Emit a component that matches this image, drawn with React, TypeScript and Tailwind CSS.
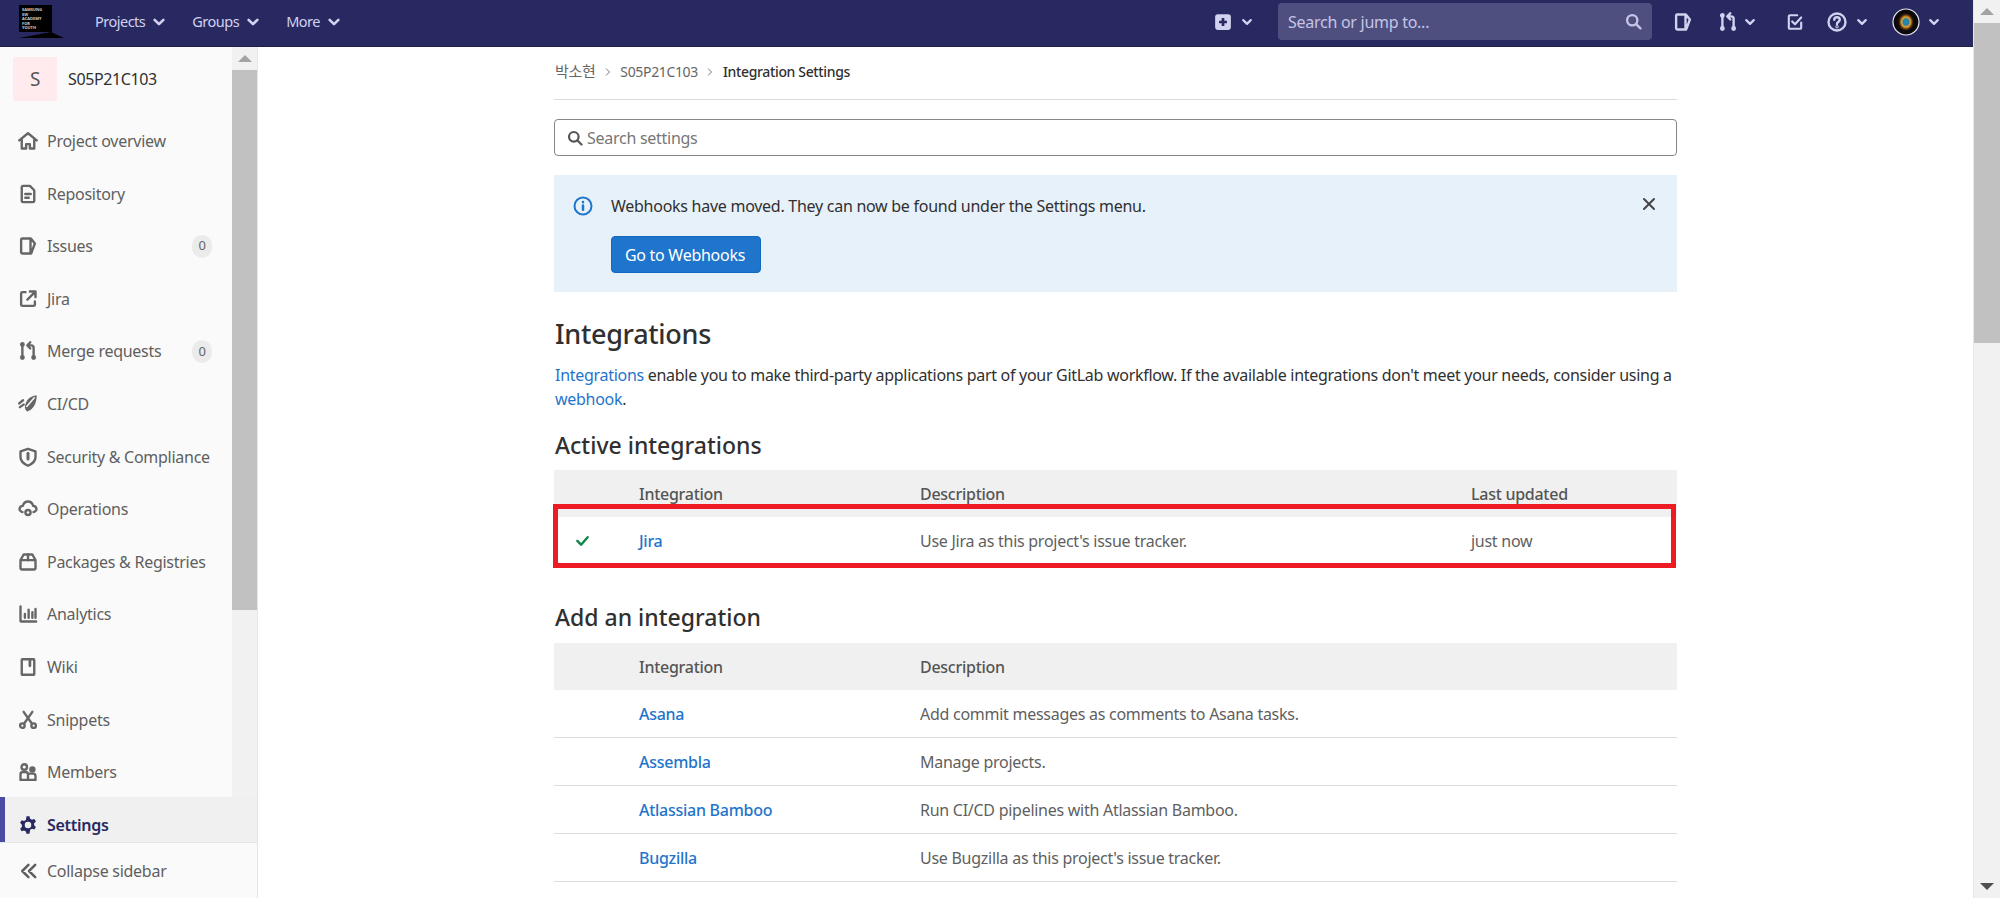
import React from "react";

const I = ({ children, size = 20, sw = 1.9, className = "" }: { children: React.ReactNode; size?: number; sw?: number; className?: string }) => (
  <svg width={size} height={size} viewBox="0 0 16 16" fill="none" stroke="currentColor" strokeWidth={sw} strokeLinecap="round" strokeLinejoin="round" className={"shrink-0 " + className}>
    {children}
  </svg>
);

const Chev = ({ size = 14, className = "" }: { size?: number; className?: string }) => (
  <svg width={size} height={size} viewBox="0 0 16 16" fill="none" stroke="currentColor" strokeWidth={3} strokeLinecap="round" strokeLinejoin="round" className={"shrink-0 " + className}>
    <path d="M3 5.5 8 10.5 13 5.5" />
  </svg>
);

const icons: Record<string, React.ReactNode> = {
  home: <path d="M1 7.5 8 1.8l7 5.7M3 6.2V14h3.5v-3.5h3V14H13V6.2" />,
  repo: <><path d="M3 2.5a1 1 0 0 1 1-1h5.5L13 5v8.5a1 1 0 0 1-1 1H4a1 1 0 0 1-1-1z" /><path d="M5.8 8h4.4M5.8 11h2.8" /></>,
  issues: <path d="M3.5 2h6.8l3.2 4-3 8H3.5a1 1 0 0 1-1-1V3a1 1 0 0 1 1-1zM10 2v12" />,
  jira: <><path d="M6 2.5H3.5a1 1 0 0 0-1 1v9a1 1 0 0 0 1 1h9a1 1 0 0 0 1-1V10" /><path d="M7.5 8.5 13.5 2.5M9.5 2h4.5v4.5" /></>,
  mr: <><circle cx="3.5" cy="2.8" r="1" /><circle cx="3.5" cy="13.2" r="1" /><circle cx="12.5" cy="13.2" r="1" /><path d="M3.5 4v8M12.5 12V5.5a2 2 0 0 0-2-2H8M9.8 1 7.5 3.5 9.8 6" /></>,
  ci: <><path d="M15 1C9.500 1.500 6 5 5.500 10.500 5.800 12 6.500 13.500 7.500 14 12 12.500 14.800 8 15 1z" fill="currentColor" stroke="none" /><path d="M13 3 7 10" stroke="#fafafa" strokeWidth={1.200} /><path d="M1 7.500 4 5M1.500 10.500 4.500 8.500" /></>,
  shield: <><path d="M8 1.5 14 3.5V8c0 3-2.5 5.5-6 7-3.500-1.500-6-4-6-7V3.500z" /><path d="M8 5v4.500" strokeWidth={2.400} /></>,
  ops: <><path d="M3.500 10.500C1.500 10 1 8.500 1.300 7.500c.3-1.200 1.400-2 2.500-2C4.500 3.200 6 2 8 2s3.500 1.200 4.200 3.500c1.100 0 2.200.8 2.500 2 .3 1-.2 2.500-2.200 3" /><circle cx="8" cy="10.700" r="3" fill="currentColor" stroke="none" /><circle cx="8" cy="10.700" r="1" fill="#fafafa" stroke="none" /></>,
  pkg: <><path d="M2 6.500h12V13a1 1 0 0 1-1 1H3a1 1 0 0 1-1-1zM2 6.500 4.500 2h7L14 6.500" /><path d="M8 2v4.500" /></>,
  chart: <path d="M2 2v11.500a.500.500 0 0 0 .500.500H14.500M5.500 8v3M8.500 4.500V11M11.500 6.500V11M14 4v7" />,
  wiki: <><path d="M3.500 1.800h9a.500.500 0 0 1 .500.500v11.400a.500.500 0 0 1-.500.500h-9a.500.500 0 0 1-.500-.500V2.300a.500.500 0 0 1 .500-.500z" /><path d="M9.500 2v5" strokeWidth={2.200} /></>,
  snip: <><circle cx="3.500" cy="12.500" r="1.800" /><circle cx="12.500" cy="12.500" r="1.800" /><path d="M4.500 1.500 11.200 11M11.500 1.500 4.800 11" /></>,
  users: <><circle cx="5" cy="4" r="2.200" /><circle cx="11.500" cy="6" r="1.600" fill="currentColor" /><path d="M2 14.300V10a2 2 0 0 1 2-2h2a2 2 0 0 1 2 2v4.300zM8 14.300h6v-3a2 2 0 0 0-2-2H9.500" /></>,
  gear: <><path d="M6.800 1h2.400l.5 1.900 1.500.8 1.900-.6 1.200 2-1.400 1.400v1.700l1.400 1.400-1.200 2-1.900-.6-1.500.8L9.200 15H6.800l-.5-1.900-1.500-.8-1.900.6-1.200-2 1.400-1.400V7.800L1.700 6.100l1.200-2 1.900.6 1.500-.8z" fill="currentColor" stroke="none" /><circle cx="8" cy="8" r="2.600" fill="#f0f0f0" stroke="none" /></>,
  collapse: <path d="M7.500 2.500 2 8l5.500 5.500M13.500 2.500 8 8l5.500 5.500" />,
};

const items: { name: string; icon: string; badge?: boolean }[] = [
  { name: "Project overview", icon: "home" },
  { name: "Repository", icon: "repo" },
  { name: "Issues", icon: "issues", badge: true },
  { name: "Jira", icon: "jira" },
  { name: "Merge requests", icon: "mr", badge: true },
  { name: "CI/CD", icon: "ci" },
  { name: "Security & Compliance", icon: "shield" },
  { name: "Operations", icon: "ops" },
  { name: "Packages & Registries", icon: "pkg" },
  { name: "Analytics", icon: "chart" },
  { name: "Wiki", icon: "wiki" },
  { name: "Snippets", icon: "snip" },
  { name: "Members", icon: "users" },
];

const Up = ({ className = "" }: { className?: string }) => (
  <div className={"h-0 w-0 border-x-[7px] border-b-[7px] border-x-transparent " + className} />
);

function TopBar() {
  return (
    <header className="flex h-[47px] shrink-0 items-center border-b border-[#1f1f4f] bg-[#292961] text-[#d1d1f0]">
      <div className="relative ml-[19px] mt-[5px] h-[33px] w-[45px] shrink-0 self-start">
        <div className="h-[27px] w-[33px] bg-black pl-[3px] pt-[3px] text-[4px] font-bold leading-[4.500px] tracking-normal text-[#cfcfcf]">
          <div>SAMSUNG</div><div>SW</div><div>ACADEMY</div><div>FOR</div><div>YOUTH</div>
        </div>
        <div className="absolute left-0 top-[27px] h-0 w-0 border-b-[6px] border-l-[32px] border-r-[13px] border-b-black border-l-transparent border-r-transparent" />
      </div>
      <nav className="mb-[2px] ml-[31px] flex items-center text-[14.500px] tracking-[-0.500px]">
        <span>Projects</span><Chev className="ml-[7px]" />
        <span className="ml-[26px]">Groups</span><Chev className="ml-[7px]" />
        <span className="ml-[26px]">More</span><Chev className="ml-[7px]" />
      </nav>
      <div className="flex-1" />
      <svg width="18" height="18" viewBox="0 0 16 16" className="mb-[3px] shrink-0 text-[#d1d1f0]">
        <rect x="1" y="1" width="14" height="14" rx="2.500" fill="currentColor" />
        <path d="M8 4.500v7M4.500 8h7" stroke="#292961" strokeWidth="2.400" />
      </svg>
      <Chev size={12} className="mb-[3px] ml-[9px]" />
      <div className="ml-[25px] mt-[3px] flex h-[37px] w-[374px] items-center justify-between self-start rounded-[4px] bg-[#4f4f7f] px-[10px] text-[16px] text-[#c5c5e8]">
        <span>Search or jump to...</span>
        <I size={17} sw={2.200}><circle cx="6.800" cy="6.800" r="4.800" /><path d="m10.500 10.500 4 4" /></I>
      </div>
      <I size={20} className="mb-[3px] ml-[21px]"><path d="M3.500 2h6.800l3.200 4-3 8H3.500a1 1 0 0 1-1-1V3a1 1 0 0 1 1-1zM10 2v12" /></I>
      <I size={20} className="mb-[3px] ml-[25px]">{icons.mr}</I>
      <Chev size={12} className="mb-[3px] ml-[6px]" />
      <I size={18} className="mb-[3px] ml-[30px]"><path d="M13.500 8.500V13a1 1 0 0 1-1 1h-9a1 1 0 0 1-1-1V3a1 1 0 0 1 1-1H10M5.500 7.500 8 10l5.500-6" /></I>
      <I size={20} className="mb-[3px] ml-[23px]"><circle cx="8" cy="8" r="6.800" /><path d="M5.800 6.200C5.800 5 6.800 4.200 8 4.200s2.200.8 2.200 2c0 1.800-2.200 1.800-2.200 3.300" /><circle cx="8" cy="11.800" r=".4" /></I>
      <Chev size={12} className="mb-[3px] ml-[9px]" />
      <svg width="28" height="28" viewBox="0 0 28 28" className="mb-[3px] ml-[24px] shrink-0">
        <defs>
          <radialGradient id="nebula">
            <stop offset="0" stopColor="#1f8fc4" />
            <stop offset="0.35" stopColor="#2d7f9c" />
            <stop offset="0.55" stopColor="#e6a92e" />
            <stop offset="0.8" stopColor="#5a2a10" />
            <stop offset="1" stopColor="#0a0a0a" />
          </radialGradient>
        </defs>
        <circle cx="14" cy="14" r="13" fill="#0a0a0a" stroke="#e8e8f5" strokeWidth="1.200" />
        <ellipse cx="14" cy="14" rx="8" ry="9" fill="url(#nebula)" />
      </svg>
      <Chev size={12} className="mb-[3px] ml-[8px] mr-[33px]" />
    </header>
  );
}

function Sidebar() {
  return (
    <aside className="flex h-full w-[258px] shrink-0 flex-col border-r border-[#e5e5e5] bg-[#fafafa]">
      <div className="flex min-h-0 flex-1">
        <div className="w-[232px] shrink-0">
          <div className="ml-[13px] mt-[10px] flex h-[44px] items-center">
            <div className="flex h-[44px] w-[44px] items-center justify-center rounded-[2px] bg-[#ffebee] text-[19px] text-[#555]">S</div>
            <span className="ml-[11px] text-[16px] tracking-[-0.400px] text-[#303030]">S05P21C103</span>
          </div>
          <div className="mt-[17.500px]">
            {items.map((it) => (
              <div key={it.name} className="mb-[7.600px] flex h-[45px] items-center whitespace-nowrap pl-[18px] pr-[20px] text-[#666]">
                <I size={20} className="text-[#666]">{icons[it.icon]}</I>
                <span className="ml-[9px] text-[16px] text-[#5f5f5f]">{it.name}</span>
                {it.badge && <span className="ml-auto flex h-[23px] w-[20px] items-center justify-center rounded-[10px] bg-[#ebebeb] text-[13px] text-[#666]">0</span>}
              </div>
            ))}
          </div>
        </div>
        <div className="flex w-[25px] shrink-0 flex-col bg-[#f1f1f1]">
          <div className="flex h-[23px] items-center justify-center"><Up className="border-b-[#a3a3a3]" /></div>
          <div className="h-[540px] bg-[#c1c1c1]" />
        </div>
      </div>
      <div className="flex h-[45px] shrink-0 border-l-[5px] border-[#4b4ba3] bg-[#f0f0f0]">
        <div className="flex h-full flex-1 items-center pl-[13px] pt-[10px] text-[#292961]">
          <I size={20}>{icons.gear}</I>
          <span className="ml-[9px] text-[16px] font-semibold">Settings</span>
        </div>
      </div>
      <div className="flex h-[56px] shrink-0 items-center border-t border-[#e5e5e5] pl-[20px] text-[#5f5f5f]">
        <I size={18} sw={2.200}>{icons.collapse}</I>
        <span className="ml-[9px] text-[16px]">Collapse sidebar</span>
      </div>
    </aside>
  );
}

const Head = ({ last }: { last?: boolean }) => (
  <div className="grid h-[47px] grid-cols-[85px_281px_551px_1fr] items-center bg-[#f0f0f0] pt-[1px] text-[16px] font-medium text-[#555]">
    <span />
    <span>Integration</span>
    <span>Description</span>
    <span>{last ? "Last updated" : ""}</span>
  </div>
);

const Row = ({ name, desc, check, when }: { name: string; desc: string; check?: boolean; when?: string }) => (
  <div className="grid h-[48px] grid-cols-[85px_281px_551px_1fr] items-center border-b border-[#dbdbdb] text-[16px] text-[#5f5f5f]">
    <span className="pl-[21px] text-[#108548]">
      {check && <I size={15} sw={2.600}><path d="M2.500 8.500 6.500 12.500 13.500 4.500" /></I>}
    </span>
    <span className="font-medium text-[#1f75cb]">{name}</span>
    <span>{desc}</span>
    <span>{when}</span>
  </div>
);

function Content() {
  return (
    <main className="min-w-0 flex-1 overflow-hidden bg-white pl-[296px] pr-[296px]">
      <div className="flex h-[53px] items-center border-b border-[#dbdbdb] pb-[3px] text-[14px] tracking-[-0.350px] text-[#666]">
        <span className="ml-[1px] text-[15px]">박소현</span>
        <svg width="10" height="10" viewBox="0 0 10 10" fill="none" stroke="#777" className="mx-[7.500px]"><path d="m3 1.500 3.500 3.500L3 8.500" /></svg>
        <span>S05P21C103</span>
        <svg width="10" height="10" viewBox="0 0 10 10" fill="none" stroke="#777" className="mx-[7.500px]"><path d="m3 1.500 3.500 3.500L3 8.500" /></svg>
        <span className="font-medium text-[#303030]">Integration Settings</span>
      </div>
      <div className="mt-[19px] flex h-[37px] items-center rounded-[4px] border border-[#868686] pl-[12px] text-[16px] text-[#777]">
        <I size={16} sw={2.200} className="text-[#555]"><circle cx="6.800" cy="6.800" r="4.800" /><path d="m10.500 10.500 4 4" /></I>
        <span className="ml-[4px]">Search settings</span>
      </div>
      <div className="relative mt-[19px] h-[117px] bg-[#e7f1fa] pl-[19px] pt-[19px]">
        <div className="flex h-[24px] items-center text-[16px] text-[#303030]">
          <I size={20} sw={1.600} className="text-[#1f75cb]"><circle cx="8" cy="8" r="6.800" /><path d="M8 7.500v3.500M8 4.800v.1" strokeWidth={2} /></I>
          <span className="ml-[18px]">Webhooks have moved. They can now be found under the Settings menu.</span>
        </div>
        <div className="ml-[38px] mt-[18px] flex h-[37px] w-[150px] items-center justify-center rounded-[4px] border border-[#1068bf] bg-[#1f75cb] pr-[2px] text-[16px] text-white">Go to Webhooks</div>
        <svg width="16" height="16" viewBox="0 0 16 16" fill="none" stroke="#444" strokeWidth="2" strokeLinecap="round" className="absolute right-[20px] top-[21px]"><path d="m3 3 10 10M13 3 3 13" /></svg>
      </div>
      <h1 className="ml-[1px] mt-[22px] flex h-[40px] items-center text-[27px] font-medium tracking-[-0.300px] text-[#303030]">Integrations</h1>
      <p className="ml-[1px] mt-[9px] text-[16px] leading-[24px] tracking-[-0.290px] text-[#303030]">
        <span className="text-[#1f75cb]">Integrations</span> enable you to make third-party applications part of your GitLab workflow. If the available integrations don't meet your needs, consider using a <span className="text-[#1f75cb]">webhook</span>.
      </p>
      <h2 className="ml-[1px] mt-[18px] flex h-[32px] items-center text-[23px] font-medium tracking-normal text-[#303030]">Active integrations</h2>
      <div className="relative mt-[9px]">
        <Head last />
        <Row name="Jira" desc="Use Jira as this project's issue tracker." check when="just now" />
        <div className="absolute left-[-1px] right-[1px] top-[34px] h-[64px] border-[5px] border-[#ed1c24]" />
      </div>
      <h2 className="ml-[1px] mt-[36px] flex h-[32px] items-center text-[23px] font-medium tracking-normal text-[#303030]">Add an integration</h2>
      <div className="mt-[10px]">
        <Head />
        <Row name="Asana" desc="Add commit messages as comments to Asana tasks." />
        <Row name="Assembla" desc="Manage projects." />
        <Row name="Atlassian Bamboo" desc="Run CI/CD pipelines with Atlassian Bamboo." />
        <Row name="Bugzilla" desc="Use Bugzilla as this project's issue tracker." />
      </div>
    </main>
  );
}

export default function App() {
  return (
    <div className="flex h-[898px] w-[2000px] overflow-hidden bg-white font-['Noto_Sans','Noto_Sans_CJK_KR',sans-serif] tracking-[-0.270px]">
      <div className="flex min-w-0 flex-1 flex-col">
        <TopBar />
        <div className="flex min-h-0 flex-1">
          <Sidebar />
          <Content />
        </div>
      </div>
      <div className="flex w-[27px] shrink-0 flex-col border-l border-[#e8e8e8] bg-[#f1f1f1]">
        <div className="flex h-[23px] items-center justify-center"><Up className="border-b-[#a3a3a3]" /></div>
        <div className="h-[320px] bg-[#c1c1c1]" />
        <div className="flex-1" />
        <div className="flex h-[23px] items-center justify-center"><Up className="rotate-180 border-b-[#505050]" /></div>
      </div>
    </div>
  );
}
